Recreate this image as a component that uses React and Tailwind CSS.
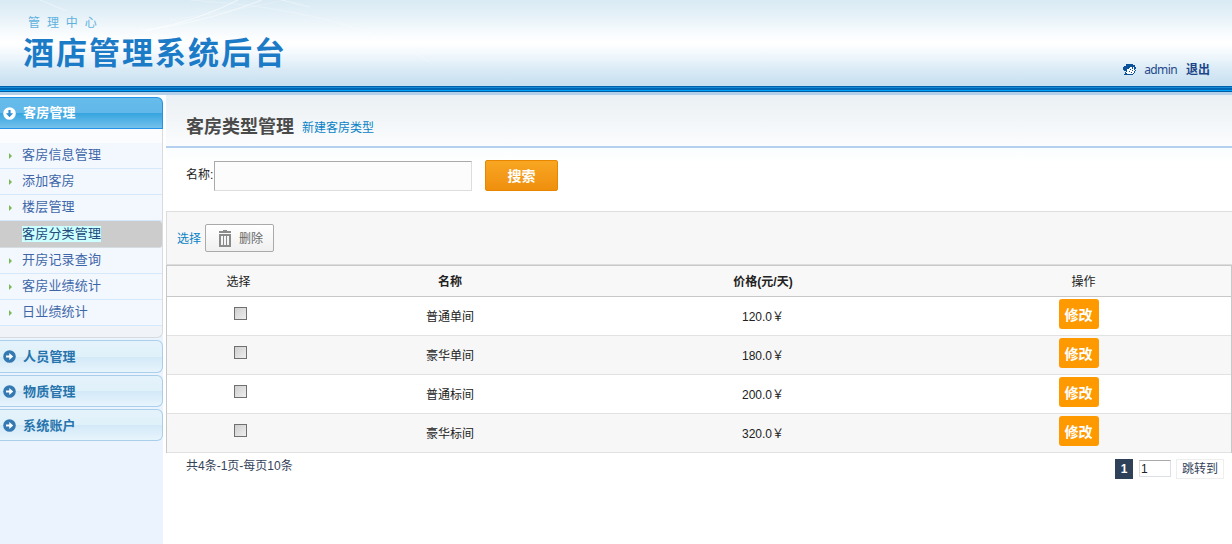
import React, { useState } from 'react';

const menuItems = [
  '客房信息管理',
  '添加客房',
  '楼层管理',
  '客房分类管理',
  '开房记录查询',
  '客房业绩统计',
  '日业绩统计',
];

const rooms = [
  { name: '普通单间', price: '120.0￥' },
  { name: '豪华单间', price: '180.0￥' },
  { name: '普通标间', price: '200.0￥' },
  { name: '豪华标间', price: '320.0￥' },
];

function ArrowIcon({ down }) {
  return (
    <svg viewBox="0 0 12 12" className="h-[13px] w-[13px] shrink-0">
      <circle cx="6" cy="6" r="5.8" fill={down ? '#ffffff' : '#3579b3'} />
      <path
        d="M2.8 5h3V2.7L9.4 6 5.8 9.3V7h-3z"
        fill={down ? '#2f8fd0' : '#ffffff'}
        transform={down ? 'rotate(90 6 6)' : undefined}
      />
    </svg>
  );
}

function TrashIcon() {
  return (
    <svg viewBox="0 0 12 17" className="h-[17px] w-3 shrink-0" fill="#8b8b8b">
      <path d="M4 0h4v1h4v2H0V1h4zM0 4h12v13H0zM2 6v9h2V6zM5 6v9h2V6zM8 6v9h2V6z" fillRule="evenodd" />
    </svg>
  );
}

function UserIcon() {
  return (
    <svg viewBox="0 0 13 11" className="mb-0.5 h-[11px] w-[13px] shrink-0" shapeRendering="crispEdges">
      <path
        d="M3 0h7v1h2v2h1v2h-1v1h1v1h-1v2h-1v1h-1v1H9v-1h1V9h1V7h1V6h-1V3h-1v2H9V3H7v1H6v1H5v3H4v1h1v1H4v1H1v-1h1V8h1V7H1V6H0V3h1V2h2z"
        fill="#0a539b"
      />
      <path d="M7 3h2v2h1V3h1v3h1v1h-1v2h-1v1H4V9H3V8h1V5h2V4h1z" fill="#fff" />
      <path d="M7 5h1v1H7zM9 6h1v1H9zM6 7h1v1H6zM8 8h1v1H8zM4 10h5v1H4z" fill="#0a539b" />
    </svg>
  );
}

function Header() {
  return (
    <header className="relative h-[95px] shrink-0">
      <div className="relative flex h-[86px] justify-between overflow-hidden bg-[linear-gradient(#d9eaf4_0%,#e7f2f8_20%,#f9fcfe_40%,#ffffff_50%,#f3f9fd_62%,#d7e9f5_83%,#c7dff0_100%)]">
        <svg viewBox="0 0 500 86" className="absolute left-0 top-0 h-[86px] w-[500px]" fill="none" stroke="#fff">
          <path d="M145 31Q200 20 238 0" opacity=".6" />
          <path d="M142 30Q200 24 262 0" opacity=".4" strokeWidth="1.5" />
          <path d="M170 20Q230 12 285 0" opacity=".2" />
          <path d="M40 0 67 11M282 0l28 7" opacity=".4" />
          <path d="M190 0Q350 10 430 62" opacity=".25" />
        </svg>
        <div className="relative pl-[23px]">
          <p className="mt-[14px] pl-[5px] text-[12px] leading-[18px] tracking-[6.9px] text-[#5fb1df]">管理中心</p>
          <h1 className="mt-0.5 text-[31px] font-bold leading-[40px] tracking-[2px] text-[#1c7bc7]">酒店管理系统后台</h1>
        </div>
        <div className="relative mr-[22px] mt-[61px] flex h-[18px] items-center text-[12px] text-[#25498a]">
          <UserIcon />
          <span className="ml-2 font-['Noto_Sans','Noto_Sans_CJK_SC',sans-serif] tracking-[-0.6px]">admin</span>
          <a className="ml-[9px] font-bold text-[#1c4488]">退出</a>
        </div>
      </div>
      <div className="h-px bg-[#0060ac]" />
      <div className="h-px bg-[#168bd5]" />
      <div className="h-0.5 bg-[#0065b3]" />
      <div className="h-px bg-[#00a4fc]" />
      <div className="h-px bg-[#005ba3]" />
      <div className="h-[3px] bg-[#b4d0eb]" />
    </header>
  );
}

function SideHeading({ children, className }) {
  return (
    <div
      className={`flex items-center rounded-r-[6px] border border-l-0 border-[#a9cfeb] bg-[linear-gradient(#e4f2fb_0%,#e0f1fa_50%,#d3e9f8_51%,#e7f4fc_100%)] pl-[3px] text-[13px] font-bold text-[#2774ac] ${className}`}
    >
      <ArrowIcon />
      <span className="ml-[7px] pt-px tracking-[0.2px]">{children}</span>
    </div>
  );
}

function Sidebar() {
  const [active, setActive] = useState('客房分类管理');

  return (
    <aside className="w-[163px] shrink-0 bg-[#ebf3ff] leading-[18px]">
      <div className="bg-white pt-0.5">
        <div className="flex h-8 items-center rounded-tr-[6px] border border-l-0 border-[#2492e6] bg-[linear-gradient(#65bbea_0%,#62b8e8_49%,#37a5e0_51%,#73c0eb_100%)] pl-[3px] text-[13px] font-bold text-white">
          <ArrowIcon down />
          <span className="ml-[7px] tracking-[0.2px]">客房管理</span>
        </div>
      </div>
      <div className="rounded-br-[6px] border-b border-r border-[#d9dcde] bg-[#f0f4f8] pb-[11px]">
        <div className="h-[14px] bg-[#fbfcfd]" />
        <ul className="text-[13px] tracking-[0.2px] text-[#3f67a8]">
          {menuItems.map((item) => {
            const selected = item === active;
            return (
              <li
                key={item}
                onClick={() => setActive(item)}
                className={`flex cursor-pointer items-center border-b ${
                  selected ? 'h-[27px] rounded-r-[3px] border-[#d5dce2] bg-[#cccccc]' : 'h-[26px] border-[#d5e9fa] bg-[#f3f8ff]'
                }`}
              >
                <span
                  className={`ml-[9px] mr-[10px] h-0 w-0 border-y-[3px] border-l-[3px] border-y-transparent ${
                    selected ? 'border-l-transparent' : 'border-l-[#7cb854]'
                  }`}
                />
                <span className={selected ? 'bg-[#ccffff] leading-4 text-[#234a7b]' : 'pb-0.5'}>{item}</span>
              </li>
            );
          })}
        </ul>
      </div>
      <SideHeading className="mt-0.5 h-[33px]">人员管理</SideHeading>
      <SideHeading className="mt-0.5 h-8">物质管理</SideHeading>
      <SideHeading className="mt-0.5 h-8">系统账户</SideHeading>
    </aside>
  );
}

function RoomTable() {
  const [checked, setChecked] = useState([]);
  const toggle = (name) => {
    setChecked((prev) => (prev.includes(name) ? prev.filter((n) => n !== name) : [...prev, name]));
  };

  return (
    <div className="border-x border-[#c8c8c8] text-center text-[12px] text-[#222]">
      <div className="grid h-8 grid-cols-[143px_280px_346px_1fr] items-center border-y border-[#c8c8c8] bg-[#f8f8f8] pt-0.5">
        <span>选择</span>
        <span className="font-bold">名称</span>
        <span className="font-bold">价格(元/天)</span>
        <span>操作</span>
      </div>
      {rooms.map((room, i) => (
        <div
          key={room.name}
          className={`grid h-[39px] grid-cols-[144px_278px_348px_1fr] items-center border-b border-[#e2e2e2] ${i % 2 ? 'bg-[#f7f7f7]' : 'bg-white'}`}
        >
          <input
            type="checkbox"
            checked={checked.includes(room.name)}
            onChange={() => toggle(room.name)}
            className="mb-[5px] ml-[3px] h-[13px] w-[13px] appearance-none justify-self-center border border-[#707070] bg-linear-to-br from-[#cfcfcf] to-[#eeeeee] checked:from-[#707070]"
          />
          <span className="pt-px">{room.name}</span>
          <span className="pt-px">{room.price}</span>
          <button className="mb-1 mr-[11px] h-[30px] w-10 justify-self-center rounded-[3px] bg-[#ff9900] pt-0.5 text-[14px] font-bold text-white">修改</button>
        </div>
      ))}
    </div>
  );
}

export default function App() {
  return (
    <div className="flex h-[544px] w-full flex-col overflow-hidden bg-white font-['Liberation_Sans','Noto_Sans_CJK_SC',sans-serif]">
      <Header />
      <div className="flex flex-1">
        <Sidebar />
        <main className="ml-[3px] min-w-0 flex-1 text-[12px] leading-[18px]">
          <div className="flex h-[53px] items-center border-b-2 border-[#b4d0ee] bg-linear-to-b from-[#eaf0f4] to-[#fbfcfd] pl-5 pt-3">
            <h2 className="text-[18px] font-bold leading-6 text-[#4a4a4a]">客房类型管理</h2>
            <a className="ml-2 mt-0.5 text-[#0a82c6]">新建客房类型</a>
          </div>

          {/* Search bar */}
          <div className="flex h-[63px] bg-[linear-gradient(#fafdfe,#ffffff_15px)] pl-5 pt-3">
            <label className="mt-1.5 w-7 whitespace-nowrap text-[#222]">名称:</label>
            <input className="mt-px h-[30px] w-[258px] border border-[#ddd] border-l-[#aaa] border-t-[#aaa] bg-[#fcfcfc] px-2 outline-none" />
            <button className="ml-[13px] h-[31px] w-[73px] rounded-[2px] border border-[#e88600] bg-linear-to-b from-[#f8a622] to-[#ef8f0d] text-[14px] font-bold text-white">搜索</button>
          </div>

          {/* Toolbar */}
          <div className="flex h-[54px] items-center border border-r-0 border-[#dddddd] bg-[#f7f7f7] pl-2.5">
            <a className="pt-0.5 text-[#0a82c6]">选择</a>
            <button className="ml-1 flex h-7 w-[69px] items-center rounded-[2px] border border-[#aaa] bg-linear-to-b from-white to-[#f0f0f0] pl-[13px] text-[#666]">
              <TrashIcon />
              <span className="ml-2 pt-0.5">删除</span>
            </button>
          </div>

          <RoomTable />

          <div className="flex justify-between pl-5 pr-2 text-[#34435a]">
            <span className="mt-1">共4条-1页-每页10条</span>
            <div className="mt-1.5 flex items-start">
              <span className="h-5 w-[18px] bg-[#2f4159] text-center font-bold leading-5 text-white">1</span>
              <input
                defaultValue="1"
                className="ml-1.5 mt-px h-[17px] w-8 border border-[#dcdfe5] border-t-[#aaa] px-px text-[12px] text-[#222] outline-none"
              />
              <button className="ml-[5px] h-5 w-12 border border-[#eeeeee] leading-[18px]">跳转到</button>
            </div>
          </div>
        </main>
      </div>
    </div>
  );
}
